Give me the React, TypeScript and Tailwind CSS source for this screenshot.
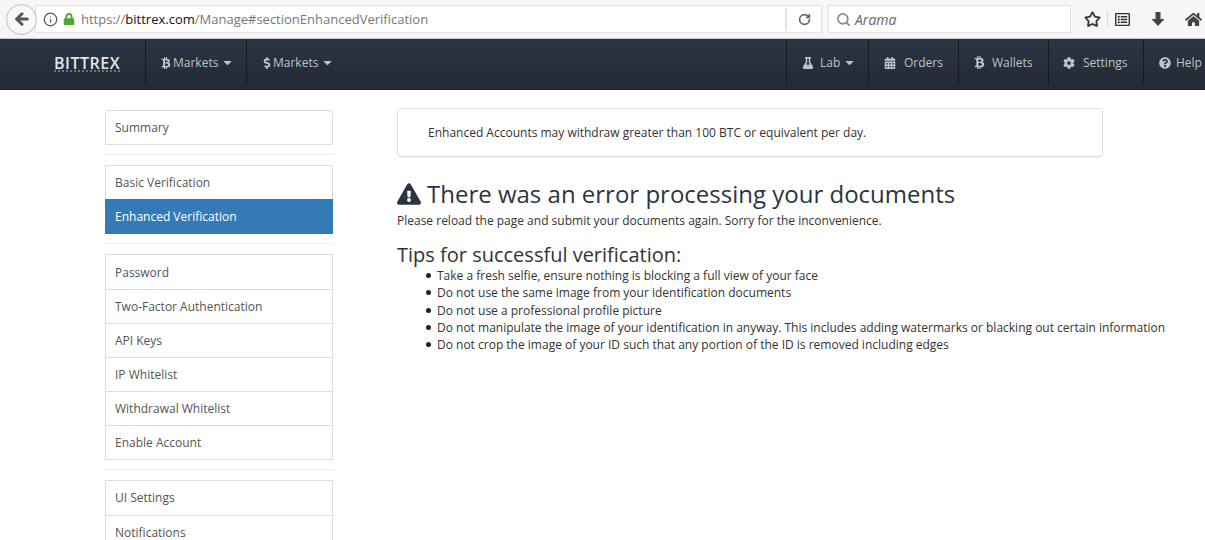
import { ReactNode } from "react";
import { ArrowLeft, Info, RotateCw, Search, Star } from "lucide-react";
import {
  FaBtc,
  FaCalendarAlt,
  FaCaretDown,
  FaCog,
  FaDollarSign,
  FaExclamationTriangle,
  FaFlask,
  FaHome,
  FaLock,
  FaQuestionCircle,
  FaRegListAlt,
} from "react-icons/fa";

const tips = [
  "Take a fresh selfie, ensure nothing is blocking a full view of your face",
  "Do not use the same image from your identification documents",
  "Do not use a professional profile picture",
  "Do not manipulate the image of your identification in anyway. This includes adding watermarks or blacking out certain information",
  "Do not crop the image of your ID such that any portion of the ID is removed including edges",
];

const raisedItems = ["Basic Verification", "Enhanced Verification", "UI Settings"];

function BrowserBar() {
  return (
    <div className="flex h-[39px] items-center bg-[#f6f6f6] border-b border-[#c8c8c8] pl-[6px] font-['Open_Sans',sans-serif]">
      <div className="z-10 flex h-[31px] w-[31px] shrink-0 items-center justify-center rounded-full border border-[#bdbdbd] bg-[#f8f8f8]">
        <ArrowLeft size={18} strokeWidth={4} className="text-[#555]" />
      </div>
      <div className="-ml-[2px] flex h-[28px] w-[752px] shrink-0 items-center border border-[#e2e2e2] bg-white">
        <Info size={15} className="ml-[7px] text-[#555]" />
        <FaLock size={12} className="ml-[5px] text-[#4ea72e]" />
        <div className="ml-[6px] pt-[2px] text-[13px] text-[#777] whitespace-nowrap">
          https://<span className="text-[#111]">bittrex.com</span>/Manage#sectionEnhancedVerification
        </div>
        <div className="ml-auto h-[22px] border-l border-[#e2e2e2]" />
      </div>
      <div className="flex h-[28px] w-[35px] shrink-0 items-center justify-center border border-l-0 border-[#e2e2e2] bg-white">
        <RotateCw size={13} strokeWidth={3} className="text-[#666]" />
      </div>
      <div className="ml-[6px] flex h-[28px] w-[243px] shrink-0 items-center border border-[#e2e2e2] bg-white pl-[7px]">
        <Search size={15} strokeWidth={2.5} className="text-[#888]" />
        <span className="ml-[4px] text-[14px] italic text-[#666]">Arama</span>
      </div>
      <div className="ml-[13px] flex items-center text-[#333]">
        <Star size={17} strokeWidth={2.5} />
        <div className="ml-[6px] h-[16px] border-l border-[#d8d8d8]" />
        <FaRegListAlt size={15} className="ml-[7px]" />
        <svg viewBox="0 0 16 16" className="ml-[20px] h-[16px] w-[16px] text-[#444]" fill="currentColor">
          <path d="M5.5 1h5v7h4L8 15 1.5 8h4z" />
        </svg>
        <FaHome size={17} className="ml-[19px] text-[#444]" />
      </div>
    </div>
  );
}

function NavItem({ icon, label, caret, className }: { icon: ReactNode; label: string; caret?: boolean; className: string }) {
  return (
    <div className={`flex h-[46px] items-center border-l border-[#14191f] pt-[1px] text-[12px] text-[#bfc3c8] ${className}`}>
      {icon}
      <span>{label}</span>
      {caret && <FaCaretDown size={13} className="ml-[3px]" />}
    </div>
  );
}

function TopNav() {
  return (
    <div className="flex h-[51px] items-start bg-gradient-to-b from-[#2b3542] to-[#222a35] pl-[54px] font-['Open_Sans',sans-serif] border-b border-[#1d232b] overflow-hidden">
      <div className="mt-[14px] w-[91px] text-[16px] font-semibold leading-[20px] tracking-[0.5px] text-[#e4e6e8] underline decoration-dotted decoration-[#8a8f95] underline-offset-2">
        BITTREX
      </div>
      <NavItem className="w-[101px] pl-[14px]" icon={<FaBtc size={12} className="mr-[1px]" />} label="Markets" caret />
      <NavItem className="pl-[14px]" icon={<FaDollarSign size={12} />} label="Markets" caret />
      <div className="ml-auto flex">
        <NavItem className="w-[82px] pl-[15px]" icon={<FaFlask size={12} className="mr-[6px]" />} label="Lab" caret />
        <NavItem className="w-[90px] pl-[15px]" icon={<FaCalendarAlt size={12} className="mr-[8px]" />} label="Orders" />
        <NavItem className="w-[90px] pl-[14px]" icon={<FaBtc size={13} className="mr-[6px]" />} label="Wallets" />
        <NavItem className="w-[95px] pl-[14px]" icon={<FaCog size={12} className="mr-[8px]" />} label="Settings" />
        <NavItem className="w-[62px] pl-[15px]" icon={<FaQuestionCircle size={12} className="mr-[5px]" />} label="Help" />
      </div>
    </div>
  );
}

function SideGroup({ items, active }: { items: string[]; active?: string }) {
  return (
    <div className="flex flex-col border border-[#dddddd]">
      {items.map((item, i) => (
        <div
          key={item}
          className={`flex h-[34px] items-center text-[12px] ${raisedItems.includes(item) ? "pb-[1px]" : "pt-[1px]"} ${i > 0 ? "border-t border-[#dddddd]" : ""} ${
            item === active ? "-mx-px -mb-px -mt-px h-[35px] bg-[#337ab7] px-[10px] !border-[#337ab7] text-white" : "px-[9px] text-[#555]"
          }`}
        >
          {item}
        </div>
      ))}
    </div>
  );
}

export default function App() {
  return (
    <div className="h-[540px] w-[1205px] overflow-hidden bg-white font-['Open_Sans',sans-serif]">
      <BrowserBar />
      <TopNav />
      <div className="flex pl-[105px]">
        <aside className="w-[228px] shrink-0 pt-[20px]">
          <div className="flex h-[35px] items-center rounded-t-[4px] border border-[#dddddd] px-[9px] pt-[1px] text-[12px] text-[#555]">Summary</div>
          <hr className="-mx-px mt-[9px] mb-[10px] border-[#eeeeee]" />
          <SideGroup items={["Basic Verification", "Enhanced Verification"]} active="Enhanced Verification" />
          <hr className="-mx-px mt-[9px] mb-[10px] border-[#eeeeee]" />
          <SideGroup items={["Password", "Two-Factor Authentication", "API Keys", "IP Whitelist", "Withdrawal Whitelist", "Enable Account"]} />
          <hr className="-mx-px mt-[9px] mb-[10px] border-[#eeeeee]" />
          <SideGroup items={["UI Settings", "Notifications"]} />
        </aside>
        <main className="ml-[64px] pt-[18px] text-[#333]">
          <div className="flex h-[49px] w-[706px] items-center rounded-[4px] border border-[#dddddd] pl-[30px] pt-[1px] text-[12px] shadow-[0_1px_1px_rgba(0,0,0,0.05)]">
            Enhanced Accounts may withdraw greater than 100 BTC or equivalent per day.
          </div>
          <h1 className="mt-[21px] flex h-[32px] items-center text-[24px] leading-[32px] text-[#2b3542] whitespace-nowrap">
            <FaExclamationTriangle size={24} className="mr-[6px]" />
            There was an error processing your documents
          </h1>
          <p className="mt-[2px] text-[12px] leading-[18px]">Please reload the page and submit your documents again. Sorry for the inconvenience.</p>
          <h2 className="mt-[13px] text-[20px] leading-[24px] text-[#333]">Tips for successful verification:</h2>
          <ul className="pl-[29px] text-[12px] leading-[17.3px] whitespace-nowrap">
            {tips.map((tip) => (
              <li key={tip} className="flex items-center">
                <span className="mr-[6px] h-[5px] w-[5px] rounded-full bg-[#222]" />
                {tip}
              </li>
            ))}
          </ul>
        </main>
      </div>
    </div>
  );
}
